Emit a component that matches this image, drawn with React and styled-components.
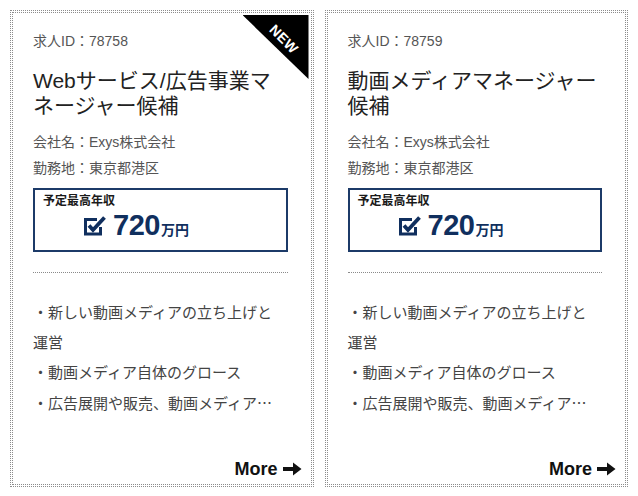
import React from "react";
import styled, { createGlobalStyle } from "styled-components";

const Global = createGlobalStyle`
  html, body { margin: 0; padding: 0; background: #fff; }
  body { font-family: "Liberation Sans", "Noto Sans CJK JP", sans-serif; }
  * { box-sizing: border-box; }
`;

const Page = styled.div`
  display: flex;
  gap: 15px;
  padding: 12px;
`;

const Card = styled.div`
  position: relative;
  width: 300px;
  height: 473px;
  border: 1px dotted #8c8c8c;
  outline: 1px dotted #8c8c8c;
  outline-offset: 1px;
  background: #fff;
  padding: 18px 23px 3px 20px;
  display: flex;
  flex-direction: column;
`;

const Ribbon = styled.div`
  position: absolute;
  top: 2px;
  right: 2px;
  width: 66px;
  height: 64px;
  background: #000;
  clip-path: polygon(0 0, 100% 0, 100% 100%);
`;

const RibbonText = styled.span`
  position: absolute;
  left: 41px;
  top: 24px;
  transform: translate(-50%, -50%) rotate(45deg);
  color: #fff;
  font-weight: bold;
  font-size: 14px;
  letter-spacing: 0.5px;
  line-height: 1;
`;

const JobId = styled.div`
  font-size: 14px;
  line-height: 20px;
  color: #555;
`;

const Title = styled.h2`
  margin: 17px 0 0;
  font-size: 21px;
  font-weight: normal;
  line-height: 25px;
  color: #222;
`;

const Meta = styled.div`
  font-size: 14px;
  line-height: 26px;
  color: #555;
  margin-top: ${(p) => (p.$first ? "11px" : "0")};
`;

const SalaryBox = styled.div`
  margin-top: 7px;
  border: 2px solid #1c3a68;
  padding: 3px 8px 9px;
`;

const SalaryLabel = styled.div`
  font-size: 12px;
  line-height: 16px;
  font-weight: bold;
  color: #1a1a1a;
`;

const AmountRow = styled.div`
  display: flex;
  align-items: baseline;
  height: 32px;
  margin-left: 40px;
  color: #102f5e;
`;

const CheckIcon = styled.svg`
  display: block;
  flex: 0 0 23px;
  width: 23px;
  height: 21px;
  align-self: center;
  margin-right: 7px;
  margin-top: 1px;
`;

const Amount = styled.span`
  font-size: 29px;
  line-height: 32px;
  font-weight: bold;
  letter-spacing: -0.5px;
`;

const Unit = styled.span`
  font-size: 14px;
  font-weight: bold;
  margin-left: 1px;
`;

const Divider = styled.hr`
  margin: 20px 0 0;
  border: 0;
  border-top: 1px dotted #8a8a8a;
  height: 0;
`;

const Points = styled.ul`
  list-style: none;
  margin: 25px 0 0;
  padding: 0 10px 0 0;
  font-size: 15px;
  line-height: 30px;
  color: #444;
`;

const Point = styled.li``;

const CjkMark = styled.span`
  font-family: "Noto Sans CJK JP", sans-serif;
`;

const More = styled.a`
  margin-top: auto;
  margin-right: -14px;
  align-self: flex-end;
  display: flex;
  align-items: center;
  gap: 5px;
  font-size: 18px;
  line-height: 24px;
  font-weight: bold;
  color: #111;
  text-decoration: none;
`;

const Arrow = styled.svg`
  width: 19px;
  height: 16px;
`;

const Check = () => (
  <CheckIcon viewBox="0 0 23 21">
    <path
      d="M14 4.5 H2.5 V19 H17.5 V12"
      fill="none"
      stroke="currentColor"
      strokeWidth="3"
    />
    <path
      d="M6 10.5 L10 15 L21.5 2.5"
      fill="none"
      stroke="currentColor"
      strokeWidth="3.8"
      strokeLinejoin="miter"
    />
  </CheckIcon>
);

const ArrowIcon = () => (
  <Arrow viewBox="0 0 19 16">
    <path d="M0 6 H10 V1.5 L18.5 8 L10 14.5 V10 H0 Z" fill="#111" />
  </Arrow>
);

const jobs = [
  {
    id: "78758",
    title: "Webサービス/広告事業マネージャー候補",
    isNew: true,
  },
  {
    id: "78759",
    title: "動画メディアマネージャー候補",
    isNew: false,
  },
];

const points = [
  { text: "・新しい動画メディアの立ち上げと運営" },
  { text: "・動画メディア自体のグロース" },
  { text: "・広告展開や販売、動画メディア", more: true },
];

export default function App() {
  return (
    <>
      <Global />
      <Page>
        {jobs.map((job) => (
          <Card key={job.id}>
            {job.isNew && (
              <Ribbon>
                <RibbonText>NEW</RibbonText>
              </Ribbon>
            )}
            <JobId>求人ID：{job.id}</JobId>
            <Title>{job.title}</Title>
            <Meta $first>会社名：Exys株式会社</Meta>
            <Meta>勤務地：東京都港区</Meta>
            <SalaryBox>
              <SalaryLabel>予定最高年収</SalaryLabel>
              <AmountRow>
                <Check />
                <Amount>720</Amount>
                <Unit>万円</Unit>
              </AmountRow>
            </SalaryBox>
            <Divider />
            <Points>
              {points.map((p) => (
                <Point key={p.text}>
                  {p.text}
                  {p.more && <CjkMark>…</CjkMark>}
                </Point>
              ))}
            </Points>
            <More href="#">
              More
              <ArrowIcon />
            </More>
          </Card>
        ))}
      </Page>
    </>
  );
}
